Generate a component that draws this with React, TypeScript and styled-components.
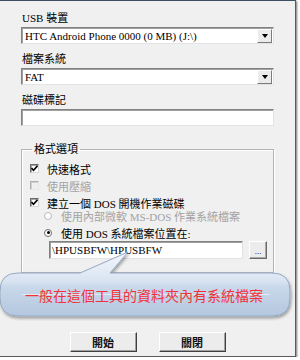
import styled, { createGlobalStyle } from 'styled-components';

const GlobalStyle = createGlobalStyle`
  html, body {
    margin: 0;
    padding: 0;
    background: #ffffff;
  }
  * {
    box-sizing: border-box;
  }
`;

const serif = `"Liberation Serif", "Noto Sans CJK TC", serif`;
const ui = `"Liberation Sans", "Noto Sans CJK TC", sans-serif`;

const Window = styled.div`
  position: relative;
  width: 296px;
  height: 357px;
  background: #f0f0f0;
  border-top: 1px solid #3e4f63;
  border-right: 1px solid #5a5a5a;
  border-bottom: 1px solid #5a5a5a;
  box-shadow: 1px 1px 2px rgba(0, 0, 0, 0.55);
  padding: 8px 21px 0 21px;
  display: flex;
  flex-direction: column;
  font-family: ${serif};
  font-size: 11px;
  color: #000;
`;

const Field = styled.div`
  display: flex;
  flex-direction: column;
  margin-bottom: 6px;
`;

const Label = styled.div`
  font-family: ${serif};
  font-size: 11px;
  line-height: 18px;
  height: 18px;
  padding-left: 1px;
`;

const Sunken = styled.div`
  height: 17px;
  background: #fff;
  border: 1px solid;
  border-color: #828282 #e3e3e3 #e3e3e3 #828282;
  box-shadow: inset 1px 1px 0 #a0a0a0;
`;

const SelectBox = styled(Sunken)`
  display: flex;
  align-items: center;
  padding-left: 3px;
`;

const SelectText = styled.span`
  flex: 1;
  font-family: ${serif};
  font-size: 11px;
  line-height: 14px;
  white-space: nowrap;
  overflow: hidden;
`;

const DropButton = styled.span`
  width: 15px;
  height: 14px;
  margin-right: 1px;
  background: #ececec;
  border: 1px solid;
  border-color: #fff #7a7a7a #7a7a7a #fff;
  display: flex;
  align-items: center;
  justify-content: center;
`;

const Arrow = styled.span`
  width: 0;
  height: 0;
  border-left: 3.5px solid transparent;
  border-right: 3.5px solid transparent;
  border-top: 4px solid #000;
`;

const Group = styled.fieldset`
  margin: 8px 0 0 0;
  padding: 2px 6px 13px 7px;
  border: 1px solid #b4b4b4;
  box-shadow: 1px 1px 0 #fff, inset 1px 1px 0 #fff;
  min-inline-size: 0;
`;

const Legend = styled.legend`
  font-size: 11px;
  line-height: 18px;
  padding: 0 2px;
  margin-left: 3px;
`;

const OptionRow = styled.div<{ $indent?: number; $disabled?: boolean; $shift?: number }>`
  display: flex;
  align-items: center;
  height: 17px;
  padding-left: ${(p) => p.$indent ?? 1}px;
  margin-top: ${(p) => p.$shift ?? 0}px;
  color: ${(p) => (p.$disabled ? '#a3a3a3' : '#000')};
  font-size: 11px;
  white-space: nowrap;
`;

const CheckBox = styled.span<{ $disabled?: boolean }>`
  width: 9px;
  height: 9px;
  margin-right: 8px;
  background: ${(p) => (p.$disabled ? '#f0f0f0' : '#fff')};
  border: 1px solid;
  border-color: ${(p) =>
    p.$disabled ? '#b0b0b0 #e8e8e8 #e8e8e8 #b0b0b0' : '#6a6a6a #d8d8d8 #d8d8d8 #6a6a6a'};
  box-shadow: inset 1px 1px 0 ${(p) => (p.$disabled ? '#d0d0d0' : '#a8a8a8')};
  display: flex;
  align-items: center;
  justify-content: center;
`;

const Radio = styled.span<{ $disabled?: boolean }>`
  width: 8px;
  height: 8px;
  margin-right: 9px;
  border-radius: 50%;
  background: #fff;
  border: 1px solid ${(p) => (p.$disabled ? '#b8b8b8' : '#6e6e6e')};
  display: flex;
  align-items: center;
  justify-content: center;
`;

const Dot = styled.span`
  width: 3px;
  height: 3px;
  border-radius: 50%;
  background: #000;
`;

const PathRow = styled.div`
  display: flex;
  align-items: center;
  gap: 6px;
  padding-left: 20px;
  height: 18px;
`;

const PathInput = styled(Sunken)`
  flex: 1;
  height: 18px;
  display: flex;
  align-items: center;
  padding-left: 2px;
  font-family: ${serif};
  font-size: 11px;
`;

const BrowseButton = styled.span`
  width: 18px;
  height: 18px;
  background: #ececec;
  border: 1px solid;
  border-color: #fff #6a6a6a #6a6a6a #fff;
  box-shadow: inset -1px -1px 0 #a8a8a8;
  display: flex;
  align-items: flex-end;
  justify-content: center;
  padding-bottom: 3px;
  font-size: 9px;
  line-height: 8px;
`;

const Callout = styled.div`
  position: absolute;
  left: 0;
  top: 248px;
  width: 296px;
  height: 72px;
  padding: 24px 8px 0 0;
`;

const CalloutShape = styled.svg`
  position: absolute;
  inset: 0;
`;

const CalloutText = styled.div`
  position: relative;
  height: 43px;
  display: flex;
  align-items: center;
  justify-content: center;
  font-family: "Noto Sans CJK TC", sans-serif;
  font-size: 14px;
  color: #f2323a;
`;

const ButtonBar = styled.div`
  margin-top: auto;
  margin-bottom: 4px;
  display: flex;
  justify-content: center;
  gap: 22px;
`;

const PushButton = styled.button`
  width: 67px;
  height: 20px;
  padding: 0;
  background: #ececec;
  border: 1px solid;
  border-color: #fff #404040 #404040 #fff;
  box-shadow: inset -1px -1px 0 #a0a0a0;
  font-family: ${ui};
  font-size: 11px;
  font-weight: bold;
  color: #111;
`;

function Check() {
  return (
    <svg width="7" height="7" viewBox="0 0 7 7">
      <path d="M0.5 3 L2.5 5.2 L6.5 0.8" fill="none" stroke="#000" strokeWidth="1.6" />
    </svg>
  );
}

export default function App() {
  return (
    <>
      <GlobalStyle />
      <Window>
        <Field>
          <Label>USB 裝置</Label>
          <SelectBox>
            <SelectText>HTC Android Phone 0000 (0 MB) (J:\)</SelectText>
            <DropButton>
              <Arrow />
            </DropButton>
          </SelectBox>
        </Field>
        <Field>
          <Label>檔案系統</Label>
          <SelectBox>
            <SelectText>FAT</SelectText>
            <DropButton>
              <Arrow />
            </DropButton>
          </SelectBox>
        </Field>
        <Field>
          <Label>磁碟標記</Label>
          <Sunken />
        </Field>

        <Group>
          <Legend>格式選項</Legend>
          <OptionRow>
            <CheckBox>
              <Check />
            </CheckBox>
            快速格式
          </OptionRow>
          <OptionRow $disabled>
            <CheckBox $disabled />
            使用壓縮
          </OptionRow>
          <OptionRow>
            <CheckBox>
              <Check />
            </CheckBox>
            建立一個 DOS 開機作業磁碟
          </OptionRow>
          <OptionRow $indent={15} $disabled $shift={-4}>
            <Radio $disabled />
            使用內部微軟 MS-DOS 作業系統檔案
          </OptionRow>
          <OptionRow $indent={15}>
            <Radio>
              <Dot />
            </Radio>
            使用 DOS 系統檔案位置在:
          </OptionRow>
          <PathRow>
            <PathInput>\HPUSBFW\HPUSBFW</PathInput>
            <BrowseButton>...</BrowseButton>
          </PathRow>
        </Group>

        <Callout>
          <CalloutShape width="296" height="72" viewBox="0 0 296 72">
            <defs>
              <linearGradient id="bubbleFill" x1="0" y1="0" x2="0" y2="1">
                <stop offset="0" stopColor="#f4f7fb" />
                <stop offset="0.45" stopColor="#d9e4f1" />
                <stop offset="0.55" stopColor="#c9d8ea" />
                <stop offset="1" stopColor="#b3c7df" />
              </linearGradient>
              <filter id="bubbleShadow" x="-5%" y="-20%" width="110%" height="150%">
                <feDropShadow dx="1" dy="2" stdDeviation="1.5" floodColor="#000" floodOpacity="0.35" />
              </filter>
            </defs>
            <path
              d="M18 24 H80 L128 3 L110 24 H272 Q290 24 290 42 V49 Q290 67 272 67 H18 Q0 67 0 49 V42 Q0 24 18 24 Z"
              fill="url(#bubbleFill)"
              stroke="#95a9c4"
              strokeWidth="1"
              filter="url(#bubbleShadow)"
            />
            <path d="M22 45.5 H270" stroke="#ffffff" strokeOpacity="0.5" strokeWidth="1" />
          </CalloutShape>
          <CalloutText>一般在這個工具的資料夾內有系統檔案</CalloutText>
        </Callout>

        <ButtonBar>
          <PushButton>開始</PushButton>
          <PushButton>關閉</PushButton>
        </ButtonBar>
      </Window>
    </>
  );
}
